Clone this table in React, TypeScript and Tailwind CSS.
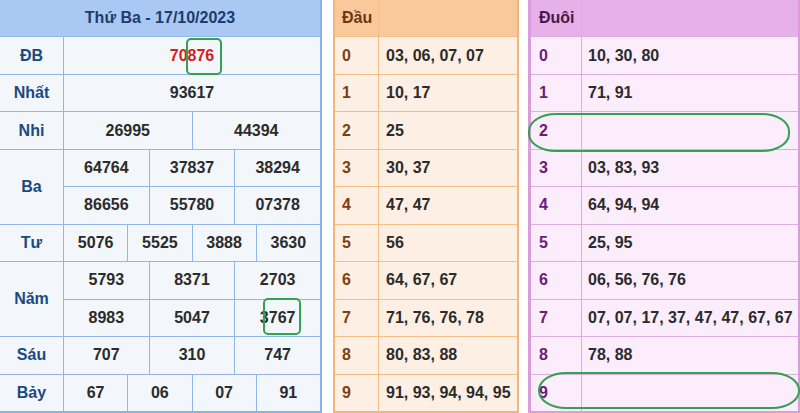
import React from "react";

const cellL = "flex items-center justify-center bg-[#f3f6fa] text-[#2b2b2b]";
const labL = "flex items-center justify-center bg-[#f3f6fa] text-[#1c4a80]";

function LeftTable() {
  return (
    <div className="relative w-[322px] h-[413px] shrink-0 border-r-2 border-b-2 border-[#8db2e8] bg-[#93b6e8]">
      <div className="grid h-full grid-cols-[63px_repeat(12,1fr)] grid-rows-[repeat(11,1fr)] gap-px text-[16px] font-bold">
        <div className="col-span-full flex items-center justify-center bg-[#a9c8f2] text-[#1d3c6e]">
          Thứ Ba - 17/10/2023
        </div>
        <div className={labL}>ĐB</div>
        <div className={`col-span-12 ${cellL} text-[#d41f1f]`}>70876</div>
        <div className={labL}>Nhất</div>
        <div className={`col-span-12 ${cellL}`}>93617</div>
        <div className={labL}>Nhi</div>
        <div className={`col-span-6 ${cellL}`}>26995</div>
        <div className={`col-span-6 ${cellL}`}>44394</div>
        <div className={`row-span-2 ${labL}`}>Ba</div>
        <div className={`col-span-4 ${cellL}`}>64764</div>
        <div className={`col-span-4 ${cellL}`}>37837</div>
        <div className={`col-span-4 ${cellL}`}>38294</div>
        <div className={`col-span-4 ${cellL}`}>86656</div>
        <div className={`col-span-4 ${cellL}`}>55780</div>
        <div className={`col-span-4 ${cellL}`}>07378</div>
        <div className={labL}>Tư</div>
        <div className={`col-span-3 ${cellL}`}>5076</div>
        <div className={`col-span-3 ${cellL}`}>5525</div>
        <div className={`col-span-3 ${cellL}`}>3888</div>
        <div className={`col-span-3 ${cellL}`}>3630</div>
        <div className={`row-span-2 ${labL}`}>Năm</div>
        <div className={`col-span-4 ${cellL}`}>5793</div>
        <div className={`col-span-4 ${cellL}`}>8371</div>
        <div className={`col-span-4 ${cellL}`}>2703</div>
        <div className={`col-span-4 ${cellL}`}>8983</div>
        <div className={`col-span-4 ${cellL}`}>5047</div>
        <div className={`col-span-4 ${cellL}`}>3767</div>
        <div className={labL}>Sáu</div>
        <div className={`col-span-4 ${cellL}`}>707</div>
        <div className={`col-span-4 ${cellL}`}>310</div>
        <div className={`col-span-4 ${cellL}`}>747</div>
        <div className={labL}>Bảy</div>
        <div className={`col-span-3 ${cellL}`}>67</div>
        <div className={`col-span-3 ${cellL}`}>06</div>
        <div className={`col-span-3 ${cellL}`}>07</div>
        <div className={`col-span-3 ${cellL}`}>91</div>
      </div>
      <div className="absolute left-[186px] top-[38px] w-[36px] h-[37px] rounded-[5px] border-2 border-[#33a352]" />
      <div className="absolute left-[263px] top-[298px] w-[38px] h-[37px] rounded-[5px] border-2 border-[#33a352]" />
    </div>
  );
}

const dau: string[] = [
  "03, 06, 07, 07",
  "10, 17",
  "25",
  "30, 37",
  "47, 47",
  "56",
  "64, 67, 67",
  "71, 76, 76, 78",
  "80, 83, 88",
  "91, 93, 94, 94, 95",
];

const duoi: string[] = [
  "10, 30, 80",
  "71, 91",
  "",
  "03, 83, 93",
  "64, 94, 94",
  "25, 95",
  "06, 56, 76, 76",
  "07, 07, 17, 37, 47, 47, 67, 67",
  "78, 88",
  "",
];

function MidTable() {
  return (
    <div className="w-[186px] h-[413px] shrink-0 border-l-2 border-r-2 border-b-2 border-[#f3b57a] bg-[#f3bd88]">
      <div className="grid h-full grid-cols-[43px_1fr] grid-rows-[repeat(11,1fr)] gap-px text-[16px] font-bold">
        <div className="flex items-center pl-[7px] bg-[#f9c99b] text-[#6e3612]">Đầu</div>
        <div className="bg-[#f9c99b]" />
        {dau.map((v, i) => (
          <React.Fragment key={i}>
            <div className="flex items-center pl-[7px] bg-[#fdefe3] text-[#7d3f12]">{i}</div>
            <div className="flex items-center pl-[7px] bg-[#fdefe3] text-[#2b2b2b]">{v}</div>
          </React.Fragment>
        ))}
      </div>
    </div>
  );
}

function RightTable() {
  return (
    <div className="relative w-[272px] h-[413px] shrink-0 border-l-[3px] border-r-2 border-b-2 border-[#d99ddc] bg-[#dcaee0]">
      <div className="grid h-full grid-cols-[50px_1fr] grid-rows-[repeat(11,1fr)] gap-px text-[16px] font-bold">
        <div className="flex items-center pl-[8px] bg-[#e6b1e8] text-[#46194a]">Đuôi</div>
        <div className="bg-[#e6b1e8]" />
        {duoi.map((v, i) => (
          <React.Fragment key={i}>
            <div className="flex items-center pl-[8px] bg-[#fcedfc] text-[#6a1c78]">{i}</div>
            <div className="flex items-center pl-[6px] bg-[#fcedfc] text-[#2b2b2b]">{v}</div>
          </React.Fragment>
        ))}
      </div>
      <div className="absolute left-[-3px] top-[113px] w-[262px] h-[39px] rounded-[28px/18px] border-2 border-[#33a352]" />
      <div className="absolute left-[7px] top-[372px] w-[262px] h-[37px] rounded-[28px/18px] border-2 border-[#33a352]" />
    </div>
  );
}

export default function App() {
  return (
    <div
      className="flex w-[800px] h-[413px] overflow-hidden bg-white"
      style={{ fontFamily: '"Liberation Sans", Arial, sans-serif' }}
    >
      <LeftTable />
      <div className="w-[11px] shrink-0" />
      <MidTable />
      <div className="w-[9px] shrink-0" />
      <RightTable />
    </div>
  );
}
